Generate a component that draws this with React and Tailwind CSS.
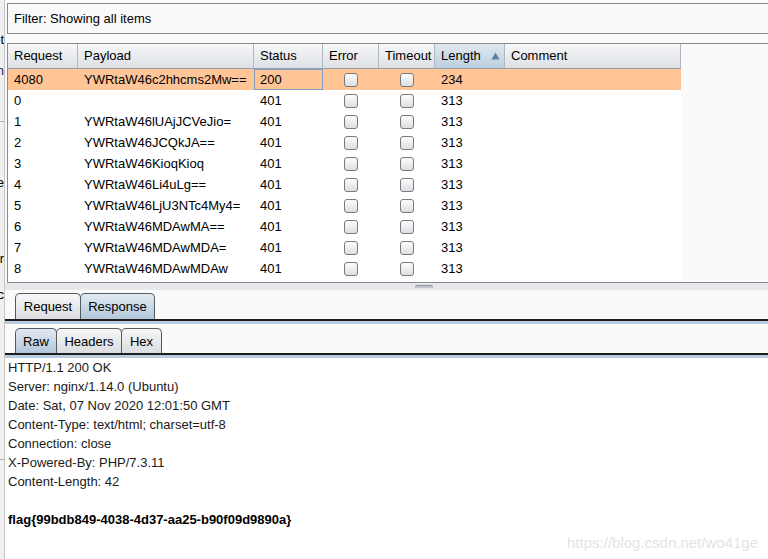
import React from "react";

const cols = [
  { name: "Request", w: "w-[70px]" },
  { name: "Payload", w: "w-[176px]" },
  { name: "Status", w: "w-[69px]" },
  { name: "Error", w: "w-[56px]" },
  { name: "Timeout", w: "w-[56px]" },
  { name: "Length", w: "w-[70px]" },
  { name: "Comment", w: "w-[176px]" },
];

const rows = [
  ["4080", "YWRtaW46c2hhcms2Mw==", "200", "234"],
  ["0", "", "401", "313"],
  ["1", "YWRtaW46lUAjJCVeJio=", "401", "313"],
  ["2", "YWRtaW46JCQkJA==", "401", "313"],
  ["3", "YWRtaW46KioqKioq", "401", "313"],
  ["4", "YWRtaW46Li4uLg==", "401", "313"],
  ["5", "YWRtaW46LjU3NTc4My4=", "401", "313"],
  ["6", "YWRtaW46MDAwMA==", "401", "313"],
  ["7", "YWRtaW46MDAwMDA=", "401", "313"],
  ["8", "YWRtaW46MDAwMDAw", "401", "313"],
];

function Check() {
  return (
    <div className="w-[14px] h-[14px] rounded-[3px] border border-[#7a7a7a] bg-gradient-to-b from-[#fdfdfd] to-[#dcdee2]" />
  );
}

function Tab({ label, selected, w }) {
  return (
    <div
      className={`${w} h-full flex items-center justify-center border border-b-0 border-[#555a60] rounded-t-[5px] -ml-px first:ml-0 ${
        selected
          ? "bg-gradient-to-b from-[#e2eaf2] to-[#b3c7da]"
          : "bg-gradient-to-b from-[#f7f7f7] to-[#dadcdf]"
      }`}
    >
      {label}
    </div>
  );
}

export default function App() {
  return (
    <div
      className="w-[768px] h-[559px] overflow-hidden flex bg-[#fafafa] text-black text-[13px] leading-none relative"
      style={{ fontFamily: '"Liberation Sans", Arial, sans-serif' }}
    >
      {/* left sliver of neighbouring panel */}
      <div className="w-[5px] shrink-0 bg-[#f0f0f0] border-r border-[#c4c4c4] overflow-hidden flex flex-col items-end text-[13px]">
        <div className="h-[33px] shrink-0" />
        <div className="h-[16px] shrink-0 whitespace-nowrap">et</div>
        <div className="h-[15px] shrink-0" />
        <div className="h-[16px] shrink-0 whitespace-nowrap text-[#1a2a6a]">n</div>
        <div className="h-[41px] shrink-0" />
        <div className="h-px w-full shrink-0 bg-[#b4b4b4]" />
        <div className="h-[54px] shrink-0" />
        <div className="h-[16px] shrink-0 whitespace-nowrap">e</div>
        <div className="h-[60px] shrink-0" />
        <div className="h-[16px] shrink-0 whitespace-nowrap">or</div>
        <div className="h-[20px] shrink-0" />
        <div className="h-[16px] shrink-0 whitespace-nowrap">c</div>
        <div className="h-[155px] shrink-0" />
        <div className="h-px w-full shrink-0 bg-[#b4b4b4]" />
      </div>

      {/* main area */}
      <div className="flex-1 min-w-0 flex flex-col">
        {/* filter */}
        <div className="pl-[2px] pt-[3px]">
          <div className="h-[31px] border border-r-0 border-[#8a8a8a] bg-[#fafafa] flex items-center pl-[6px]">
            Filter: Showing all items
          </div>
        </div>

        {/* table */}
        <div className="mt-[9px] ml-[2px] h-[240px] shrink-0 border-t border-l border-b border-[#8a8a8a] flex">
          <div className="w-[673px] bg-white flex flex-col">
            {/* header */}
            <div className="h-[25px] flex border-b border-[#9aa0a8] bg-gradient-to-b from-[#f6f7f8] to-[#dde0e5]">
              {cols.map((c) => (
                <div
                  key={c.name}
                  className={`${c.w} shrink-0 h-full flex items-center pl-[6px] pb-px border-r border-[#b3b8bf] ${
                    c.name === "Length"
                      ? "bg-gradient-to-b from-[#dfe8f0] to-[#bccfe0] justify-between pr-[4px]"
                      : ""
                  }`}
                >
                  <span>{c.name}</span>
                  {c.name === "Length" && (
                    <svg width="9" height="8" viewBox="0 0 9 8">
                      <path d="M4.5 0.5 L8.5 7.5 L0.5 7.5 Z" fill="#5b80a6" />
                    </svg>
                  )}
                </div>
              ))}
            </div>
            {rows.map((r, i) => (
              <div
                key={i}
                className={`h-[21px] flex shrink-0 ${i === 0 ? "bg-[#ffc597]" : "bg-white"}`}
              >
                <div className="w-[70px] shrink-0 flex items-center pl-[6px]">{r[0]}</div>
                <div className="w-[176px] shrink-0 flex items-center pl-[6px]">{r[1]}</div>
                <div
                  className={`w-[69px] shrink-0 flex items-center ${
                    i === 0 ? "border border-[#7c9dc2] pl-[5px]" : "pl-[6px]"
                  }`}
                >
                  {r[2]}
                </div>
                <div className="w-[56px] shrink-0 flex items-center justify-center">
                  <Check />
                </div>
                <div className="w-[56px] shrink-0 flex items-center justify-center">
                  <Check />
                </div>
                <div className="w-[70px] shrink-0 flex items-center pl-[6px]">{r[3]}</div>
                <div className="w-[176px] shrink-0" />
              </div>
            ))}
          </div>
          <div className="flex-1 bg-[#fafafa]" />
        </div>

        {/* splitter */}
        <div className="h-[7px] shrink-0 bg-[#e6e8ec] flex pl-[410px]">
          <div className="w-[18px] h-[3px] mt-[2px] rounded-t-[2px] bg-[#c2c6cc] border-t border-[#8e939a]" />
        </div>

        {/* Request / Response tabs */}
        <div className="mt-[3px] h-[26px] shrink-0 flex pl-[10px]">
          <Tab label="Request" w="w-[66px]" />
          <Tab label="Response" w="w-[75px]" selected />
        </div>
        <div className="h-[2px] shrink-0 bg-[#1e1e1e]" />
        <div className="h-[3px] shrink-0 bg-[#b9cde1]" />

        {/* Raw / Headers / Hex tabs */}
        <div className="mt-[4px] h-[25px] shrink-0 flex pl-[10px]">
          <Tab label="Raw" w="w-[42px]" selected />
          <Tab label="Headers" w="w-[66px]" />
          <Tab label="Hex" w="w-[41px]" />
        </div>
        <div className="h-[2px] shrink-0 bg-[#1e1e1e]" />
        <div className="h-[3px] shrink-0 bg-[#b9cde1]" />

        {/* response body */}
        <div className="flex-1 bg-white pl-[3px] leading-[19px] text-[#1a1a1a]">
          <div>HTTP/1.1 200 OK</div>
          <div>Server: nginx/1.14.0 (Ubuntu)</div>
          <div>Date: Sat, 07 Nov 2020 12:01:50 GMT</div>
          <div>Content-Type: text/html; charset=utf-8</div>
          <div>Connection: close</div>
          <div>X-Powered-By: PHP/7.3.11</div>
          <div>Content-Length: 42</div>
          <div>&nbsp;</div>
          <div className="font-bold text-black">flag{"{"}99bdb849-4038-4d37-aa25-b90f09d9890a{"}"}</div>
        </div>
      </div>

      <div className="absolute right-[10px] bottom-[9px] text-[15px] text-[#e4e4e4]">
        https://blog.csdn.net/wo41ge
      </div>
    </div>
  );
}
